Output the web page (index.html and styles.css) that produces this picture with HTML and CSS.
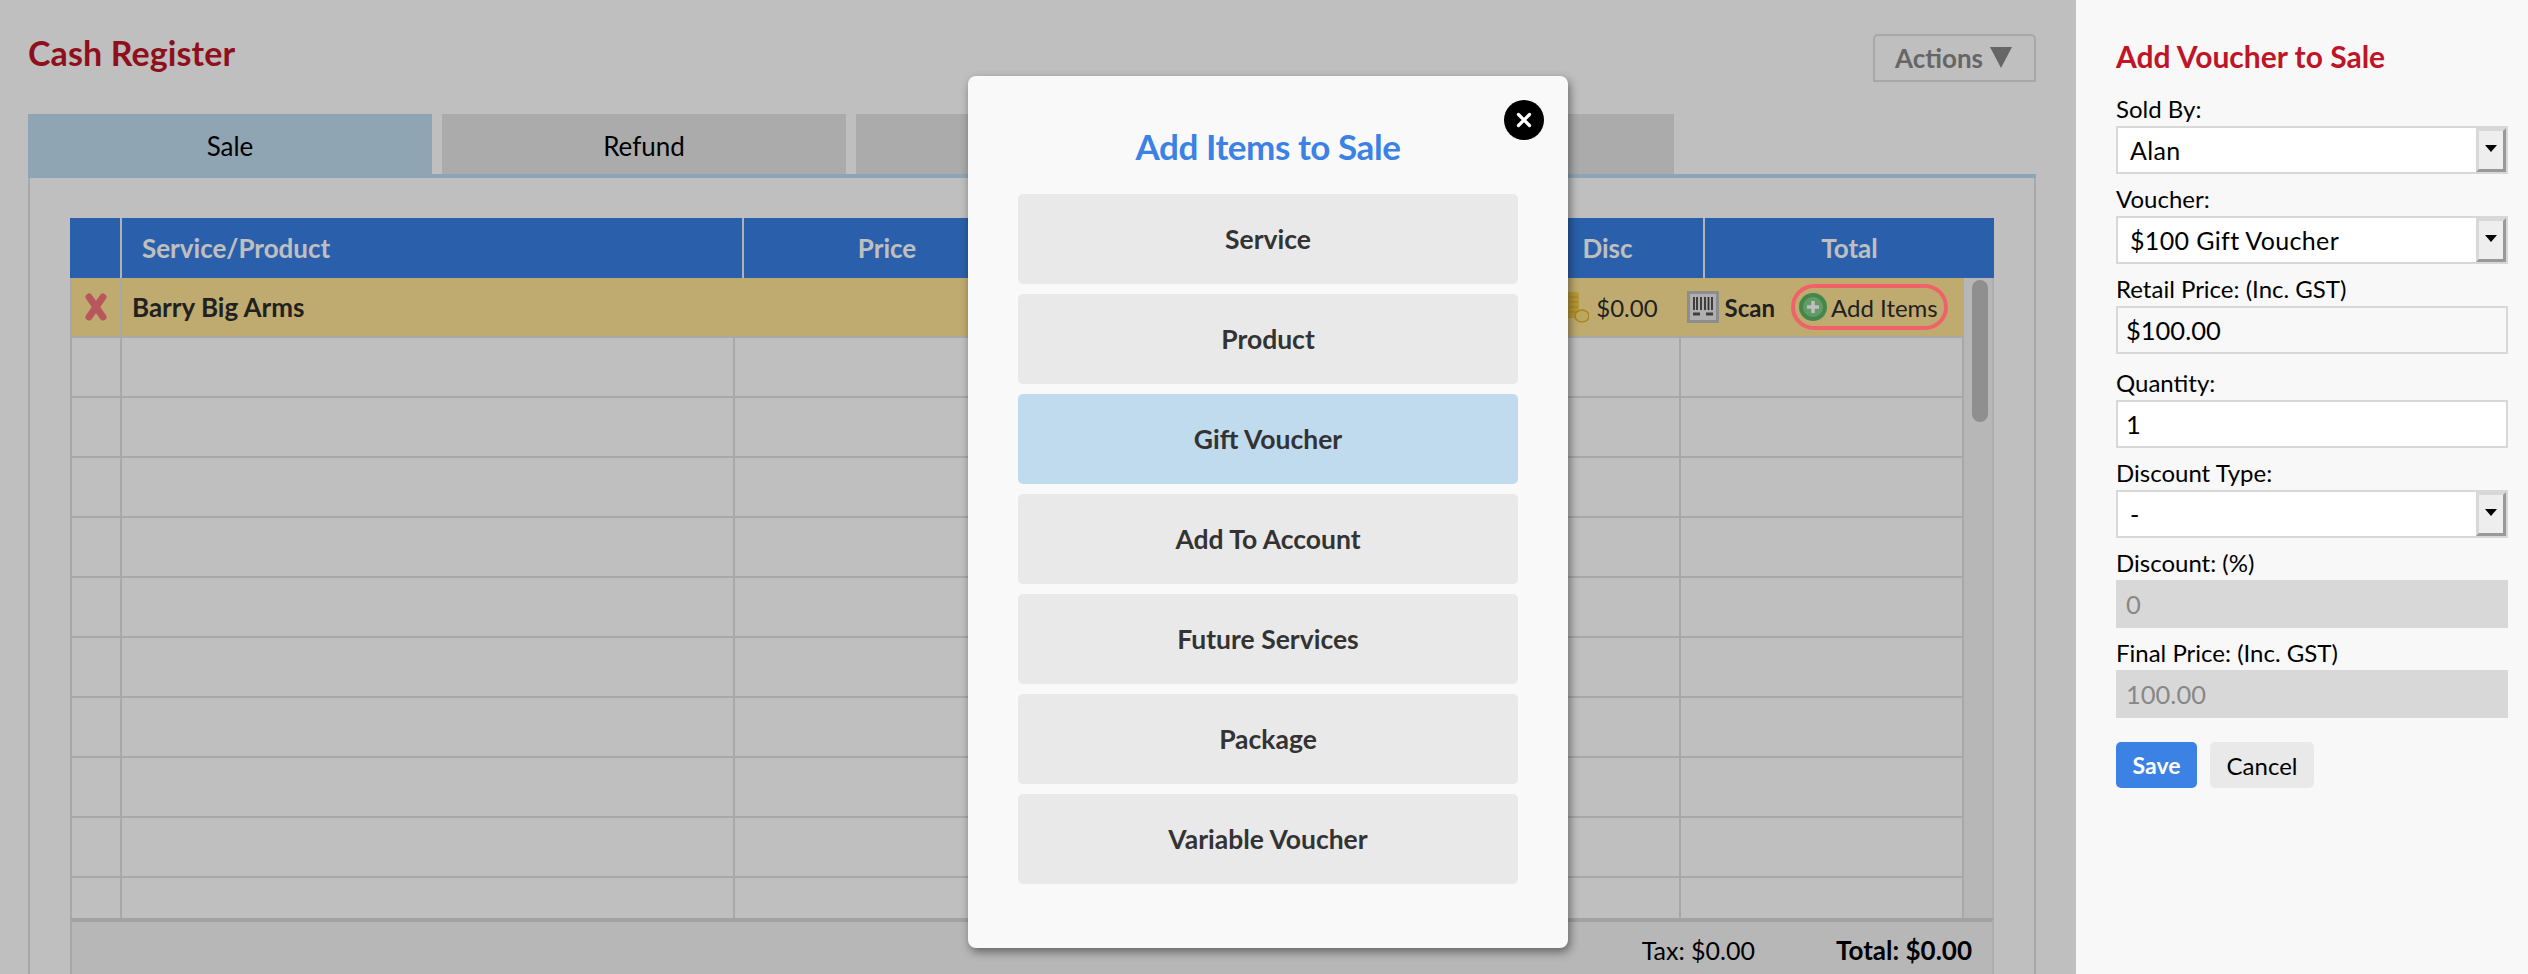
FILE: index.html
```html
<!DOCTYPE html>
<html lang="en">
<head>
<meta charset="utf-8">
<title>Cash Register</title>
<link rel="stylesheet" href="styles.css">
</head>
<body>
<div class="page">
  <main class="main">
    <header class="top">
      <h1 class="page-title">Cash Register</h1>
      <button class="actions">Actions<span class="caret"></span></button>
    </header>
    <nav class="tabs">
      <div class="tab active">Sale</div>
      <div class="tab">Refund</div>
      <div class="tab"></div>
      <div class="tab"></div>
    </nav>
    <section class="panel">
      <div class="grid">
        <div class="thead">
          <div class="th"></div>
          <div class="th left">Service/Product</div>
          <div class="th">Price</div>
          <div class="th"></div>
          <div class="th">Disc</div>
          <div class="th last">Total</div>
        </div>
        <div class="tbody">
          <div class="rows">
            <div class="row customer">
              <div class="del">
                <svg width="26" height="28" viewBox="0 0 26 28"><path d="M6 4 L20 24 M20 4 L6 24" stroke="#f4757c" stroke-width="7" stroke-linecap="round"/></svg>
              </div>
              <div class="name">Barry Big Arms</div>
              <div class="disc">
                <svg width="24" height="32" viewBox="0 0 24 32"><rect x="0" y="1" width="14" height="26" rx="3" fill="#f6cc48"/><path d="M5 6h8M5 11h8M5 16h8M5 21h8" stroke="#e4b83c" stroke-width="1.500"/><ellipse cx="17" cy="25" rx="7" ry="6" fill="#fbe07a" stroke="#e0b034" stroke-width="1.500"/></svg>
                <span>$0.00</span>
              </div>
              <div class="scan">
                <svg width="32" height="32" viewBox="0 0 32 32"><rect width="32" height="32" fill="#bdbdbd"/><rect x="3" y="3" width="26" height="26" fill="#eaeaea"/><path d="M7 6v13M10 6v13M14 6v13M18 6v13M21.500 6v13M25 6v13" stroke="#444" stroke-width="1.800"/><path d="M6 23h7M19 23h7" stroke="#555" stroke-width="3"/></svg>
                <span>Scan</span>
              </div>
              <div class="add-items">
                <svg width="28" height="28" viewBox="0 0 28 28"><circle cx="14" cy="14" r="14" fill="#5cb565"/><circle cx="14" cy="14" r="10" fill="#84cf8b"/><path d="M14 8v12M8 14h12" stroke="#fff" stroke-width="3.500"/></svg>
                <span>Add Items</span>
              </div>
            </div>
            <div class="row"><div></div><div></div><div></div><div></div></div>
            <div class="row"><div></div><div></div><div></div><div></div></div>
            <div class="row"><div></div><div></div><div></div><div></div></div>
            <div class="row"><div></div><div></div><div></div><div></div></div>
            <div class="row"><div></div><div></div><div></div><div></div></div>
            <div class="row"><div></div><div></div><div></div><div></div></div>
            <div class="row"><div></div><div></div><div></div><div></div></div>
            <div class="row"><div></div><div></div><div></div><div></div></div>
            <div class="row"><div></div><div></div><div></div><div></div></div>
            <div class="row"><div></div><div></div><div></div><div></div></div>
          </div>
          <div class="gutter"><div class="thumb"></div></div>
        </div>
        <div class="tfoot">
          <span>Tax: $0.00</span>
          <strong>Total: $0.00</strong>
        </div>
      </div>
    </section>
    <div class="scrim"></div>
    <div class="modal">
      <button class="close" aria-label="Close">
        <svg width="16" height="16" viewBox="0 0 16 16"><path d="M2.500 2.500 L13.500 13.500 M13.500 2.500 L2.500 13.500" stroke="#fff" stroke-width="3.200" stroke-linecap="round"/></svg>
      </button>
      <h2 class="modal-title">Add Items to Sale</h2>
      <div class="choices">
        <div class="choice">Service</div>
        <div class="choice">Product</div>
        <div class="choice selected">Gift Voucher</div>
        <div class="choice">Add To Account</div>
        <div class="choice">Future Services</div>
        <div class="choice">Package</div>
        <div class="choice">Variable Voucher</div>
      </div>
    </div>
  </main>
  <aside class="side">
    <h2 class="side-title">Add Voucher to Sale</h2>
    <div class="field">
      <div class="label">Sold By:</div>
      <div class="select"><span class="value">Alan</span><span class="arrow"></span></div>
    </div>
    <div class="field">
      <div class="label">Voucher:</div>
      <div class="select"><span class="value">$100 Gift Voucher</span><span class="arrow"></span></div>
    </div>
    <div class="field wide">
      <div class="label">Retail Price: (Inc. GST)</div>
      <div class="input plain">$100.00</div>
    </div>
    <div class="field">
      <div class="label">Quantity:</div>
      <div class="input">1</div>
    </div>
    <div class="field">
      <div class="label">Discount Type:</div>
      <div class="select"><span class="value">-</span><span class="arrow"></span></div>
    </div>
    <div class="field">
      <div class="label">Discount: (%)</div>
      <div class="input disabled">0</div>
    </div>
    <div class="field">
      <div class="label">Final Price: (Inc. GST)</div>
      <div class="input disabled">100.00</div>
    </div>
    <div class="buttons">
      <button class="btn save">Save</button>
      <button class="btn cancel">Cancel</button>
    </div>
  </aside>
</div>
</body>
</html>
```
FILE: styles.css
```css
* { box-sizing: border-box; }
html, body { margin: 0; padding: 0; height: 974px; overflow: hidden; }
body { font-family: Lato, "Liberation Sans", sans-serif; background: #fff; color: #000; }
h1, h2 { margin: 0; }
button { font-family: inherit; cursor: pointer; }

.page { display: flex; width: 2528px; height: 974px; }

/* main column */
.main { position: relative; flex: none; width: 2076px; height: 974px; padding: 0 40px 0 28px; background: #fff; overflow: hidden; }
.top { display: flex; justify-content: space-between; align-items: flex-start; height: 114px; padding-top: 34px; }
.page-title { margin-top: -2px; font-size: 34px; line-height: 42px; font-weight: 700; color: #bf1526; letter-spacing: 0.1px; }
.actions { display: flex; align-items: center; width: 163px; height: 48px; padding: 0 0 0 20px; background: transparent; border: 2px solid #e0e0e0; border-radius: 5px 5px 0 0; font-size: 26px; font-weight: 700; color: #888; }
.caret { width: 0; height: 0; margin-left: 7px; margin-top: -2px; border-left: 11px solid transparent; border-right: 11px solid transparent; border-top: 21px solid #888; }

.tabs { display: flex; gap: 10px; height: 64px; border-bottom: 4px solid #c0ddf0; }
.tab { width: 404px; height: 60px; background: #e5e5e5; font-size: 26px; line-height: 64px; text-align: center; }
.tab.active { height: 64px; background: #c0ddf0; }

.panel { height: 796px; padding: 40px; border-left: 2px solid #e0e0e0; border-right: 2px solid #e0e0e0; }
.grid { width: 1924px; }
.thead { display: grid; grid-template-columns: 52px 622px 288px 480px 193px 1fr; height: 60px; background: #3880e4; }
.th { border-right: 2px solid #eee; color: #fff; font-size: 26px; font-weight: 700; line-height: 60px; text-align: center; }
.th.left { padding-left: 20px; text-align: left; }
.th.last { border-right: 0; }

.tbody { display: flex; height: 640px; overflow: hidden; }
.rows { flex: none; width: 1894px; height: 640px; overflow: hidden; }
.row { display: grid; grid-template-columns: 50px 613px 946px 1fr; height: 60px; border-left: 2px solid #e0e0e0; border-right: 2px solid #e0e0e0; border-bottom: 2px solid #e0e0e0; }
.row > div { border-right: 2px solid #e0e0e0; }
.row > div:last-child { border-right: 0; }

.row.customer { display: flex; align-items: center; border-right: 0; background: #ffe595; }
.row.customer > div { border-right: 0; }
.row.customer .del { display: flex; align-items: center; justify-content: center; flex: none; width: 50px; height: 58px; border-right: 2px solid #e0e0e0; }
.name { flex: 1; padding-left: 10px; font-size: 26px; font-weight: 700; color: #2c2c2c; }
.disc { display: flex; align-items: center; gap: 7px; margin-right: 29px; font-size: 24px; color: #2c2c2c; }
.scan { display: flex; align-items: center; gap: 6px; margin-right: 16px; font-size: 24px; font-weight: 700; color: #2c2c2c; }
.add-items { position: relative; display: flex; align-items: center; gap: 4px; flex: none; width: 157px; height: 46px; margin-right: 16px; padding-left: 8px; font-size: 24px; color: #2c2c2c; }
.add-items::after { content: ""; position: absolute; inset: 0; z-index: 11; border: 4px solid #f0626a; border-radius: 23px; }

.gutter { flex: none; width: 30px; padding: 2px 4px 0 8px; background: #f5f5f5; border-right: 2px solid #e8e8e8; }
.thumb { width: 16px; height: 142px; background: #bfbfbf; border-radius: 8px; }

.tfoot { display: flex; justify-content: flex-end; gap: 81px; height: 60px; padding: 13px 20px 0 0; border-top: 4px solid #d8d8d8; border-left: 2px solid #e0e0e0; border-right: 2px solid #e8e8e8; background: #f5f5f5; font-size: 25px; line-height: 30px; }
.tfoot strong { font-size: 26px; font-weight: 700; }

.scrim { position: absolute; inset: 0; z-index: 10; background: rgba(0, 0, 0, 0.25); }

/* modal */
.modal { position: absolute; left: 968px; top: 76px; z-index: 20; width: 600px; height: 872px; padding: 48px 50px 64px; background: #f9f9f9; border-radius: 8px; box-shadow: 2px 4px 10px rgba(0, 0, 0, 0.45); }
.close { position: absolute; top: 24px; right: 24px; display: flex; align-items: center; justify-content: center; width: 40px; height: 40px; padding: 0; background: #000; border: 0; border-radius: 50%; }
.modal-title { height: 46px; margin-bottom: 24px; color: #3b82e4; font-size: 35px; line-height: 44px; font-weight: 700; text-align: center; letter-spacing: -0.45px; }
.choices { display: flex; flex-direction: column; gap: 10px; }
.choice { height: 90px; background: #e9e9e9; border-radius: 5px; color: #333; font-size: 26.500px; font-weight: 700; line-height: 90px; text-align: center; }
.choice.selected { background: #c0daee; }

/* sidebar */
.side { flex: none; width: 452px; height: 974px; padding: 36px 20px 0 40px; background: #f8f8f8; }
.side-title { height: 40px; margin-bottom: 16px; color: #bf1526; font-size: 30px; line-height: 40px; font-weight: 700; }
.field { margin-bottom: 8px; }
.field.wide { margin-bottom: 12px; }
.label { height: 34px; font-size: 24px; line-height: 34px; color: #000; }
.select { display: flex; height: 48px; background: #fff; border: 2px solid #d8d8d8; font-size: 25px; line-height: 44px; }
.value { flex: 1; padding-left: 12px; letter-spacing: 0.35px; }
.arrow { position: relative; width: 30px; background: #eee; border-style: solid; border-width: 3px; border-color: #d8d8d8 #999 #999 #d8d8d8; }
.arrow::after { content: ""; position: absolute; left: 6px; top: 14px; border-left: 6px solid transparent; border-right: 6px solid transparent; border-top: 7px solid #000; }
.input { height: 48px; padding-left: 8px; background: #fff; border: 2px solid #d8d8d8; font-size: 25.500px; line-height: 44px; }
.input.plain { background: transparent; }
.input.disabled { background: #d8d8d8; color: #888; }
.buttons { display: flex; gap: 13px; margin-top: 24px; }
.btn { height: 46px; padding: 0; border: 0; border-radius: 5px; font-size: 24px; }
.save { width: 81px; background: #3b82e4; color: #fff; font-weight: 700; font-size: 23px; }
.cancel { width: 104px; background: #e9e9e9; color: #000; }
```
